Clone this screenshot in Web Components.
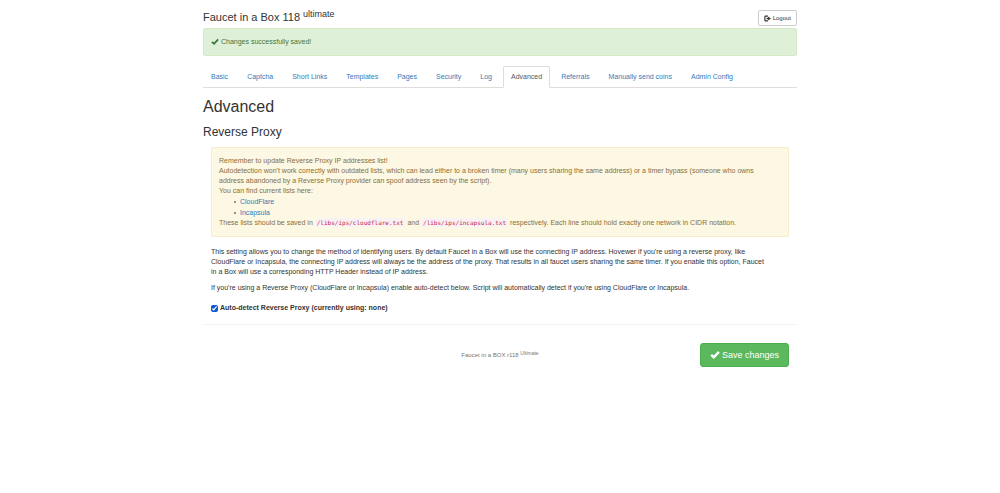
<!DOCTYPE html>
<html lang="en">
<head>
<meta charset="utf-8">
<meta name="viewport" content="width=device-width, initial-scale=1">
<title>Faucet in a Box</title>
<style>
  body {
    margin: 0;
    background: #fff;
    color: #333;
    font-family: "Liberation Sans", Arial, sans-serif;
    font-size: 7px;
    line-height: 10px;
  }
</style>
</head>
<body>
<faucet-admin></faucet-admin>

<script>
/**
 * Small inline icons.
 *
 * @element faucet-icon
 */
class FaucetIcon extends HTMLElement {
  static get shapes() {
    return {
      ok: `<path d="M0.6 9 L3.2 6.4 L6 8.8 L13 1.6 L15.6 4.2 L6.2 14.2 Z"/>`,
      logout: `<path d="M9 2.5 H3.5 Q2 2.5 2 4 V12 Q2 13.5 3.5 13.5 H9" fill="none" stroke="currentColor" stroke-width="2.6"/>
               <path d="M6 6.4 H9.6 V3.2 L15.8 8 L9.6 12.8 V9.6 H6 Z"/>`,
    };
  }

  constructor() {
    super();
    this.attachShadow({ mode: "open" });
  }

  connectedCallback() {
    this.shadowRoot.innerHTML = `
      <style>
        :host { display: inline-block; width: 8px; height: 8px; vertical-align: -2px; }
        svg { display: block; width: 100%; height: 100%; fill: currentColor; }
      </style>
      <svg viewBox="0 0 16 16" aria-hidden="true">${FaucetIcon.shapes[this.getAttribute("name")]}</svg>
    `;
  }
}

customElements.define("faucet-icon", FaucetIcon);

/**
 * A message box, type is "success" or "warning".
 *
 * @element faucet-alert
 */
class FaucetAlert extends HTMLElement {
  constructor() {
    super();
    this.attachShadow({ mode: "open" });
    this.shadowRoot.innerHTML = `
      <style>
        :host {
          display: block;
          padding: 8px 7px;
          border: 1px solid;
          border-radius: 2px;
        }
        :host([type="success"]) { color: #3c763d; background: #dff0d8; border-color: #d6e9c6; }
        :host([type="warning"]) { color: #8a6d3b; background: #fcf8e3; border-color: #faebcc; }
      </style>
      <slot></slot>
    `;
  }
}

customElements.define("faucet-alert", FaucetAlert);

/**
 * A button, variant is "default" or "success".
 *
 * @element faucet-button
 */
class FaucetButton extends HTMLElement {
  constructor() {
    super();
    this.attachShadow({ mode: "open" });
    this.shadowRoot.innerHTML = `
      <style>
        :host { display: block; }
        ::slotted(faucet-icon) { width: 7px; height: 7px; }
        :host([variant="success"]) ::slotted(faucet-icon) { width: 10px; height: 10px; }
        button {
          display: flex;
          align-items: center;
          gap: 2px;
          margin: 0;
          padding: 2px 5px;
          border: 1px solid #ccc;
          border-radius: 2px;
          background: #fff;
          color: #333;
          font: inherit;
          font-size: 6px;
          line-height: 10px;
          cursor: pointer;
        }
        :host([variant="success"]) button {
          padding: 5px 9px;
          border-color: #4cae4c;
          border-radius: 3px;
          background: #5cb85c;
          color: #fff;
          font-size: 9px;
          line-height: 12px;
        }
      </style>
      <button type="button"><slot></slot></button>
    `;
  }
}

customElements.define("faucet-button", FaucetButton);

/**
 * The row of tabs over the settings.
 *
 * @element faucet-tabs
 */
class FaucetTabs extends HTMLElement {
  static get styles() {
    return `
      <style>
        :host { display: block; border-bottom: 1px solid #ddd; }
        ul {
          display: flex;
          flex-wrap: wrap;
          gap: 3px;
          margin: 0 0 -1px;
          padding: 0;
          list-style: none;
        }
        a {
          display: block;
          padding: 5px 7px;
          border: 1px solid transparent;
          border-radius: 2px 2px 0 0;
          color: #337ab7;
          text-decoration: none;
        }
        a[aria-current] {
          border-color: #ddd #ddd #fff;
          background: #fff;
          color: #555;
        }
      </style>
    `;
  }

  constructor() {
    super();
    this.attachShadow({ mode: "open" });
  }

  connectedCallback() {
    const active = this.getAttribute("active");
    const items = this.getAttribute("items").split(",").map((name) => {
      const current = name === active ? ` aria-current="page"` : "";
      return `<li><a href="#"${current}>${name}</a></li>`;
    });
    this.shadowRoot.innerHTML = FaucetTabs.styles + `<nav><ul>${items.join("")}</ul></nav>`;
  }
}

customElements.define("faucet-tabs", FaucetTabs);

/**
 * The whole admin page.
 *
 * @element faucet-admin
 */
class FaucetAdmin extends HTMLElement {
  static get styles() {
    return `
      <style>
        :host { display: block; max-width: 594px; margin: 0 auto; padding: 10px 8px; }
        h1, h2, h3 { margin: 0; font-weight: 400; }
        header {
          display: flex;
          justify-content: space-between;
          align-items: flex-start;
          margin-bottom: 2px;
        }
        h1 { font-size: 11px; line-height: 14px; }
        h2 { margin: 10px 0 9px; font-size: 16px; line-height: 18px; }
        h3 { font-size: 12px; line-height: 14px; }
        sup { position: relative; top: -4px; font-size: 9px; line-height: 0; vertical-align: baseline; }
        faucet-tabs { margin-top: 10px; }
        .panel { padding: 8px 8px 11px; border-bottom: 1px solid #f2f2f2; }
        .notice { margin-bottom: 10px; }
        .notice ul { margin: 0; padding: 0 0 0 15px; line-height: 11px; list-style: none; }
        .notice li { display: flex; align-items: center; gap: 4px; }
        .notice li::before { content: ""; width: 2px; height: 2px; border-radius: 1px; background: currentColor; }
        a { color: #337ab7; text-decoration: none; }
        code {
          padding: 1px 2px;
          border-radius: 2px;
          background: #f9f2f4;
          color: #c7254e;
          font-family: "DejaVu Sans Mono", monospace;
          font-size: 6px;
        }
        p { margin: 0 0 6px; }
        .check {
          display: flex;
          align-items: center;
          gap: 2px;
          margin-top: 10px;
          font-weight: 700;
        }
        .check input { width: 7px; height: 7px; margin: 0; accent-color: #0b57d0; }
        footer {
          display: grid;
          grid-template-columns: 1fr auto 1fr;
          align-items: center;
          padding: 18px 8px;
        }
        footer small { grid-column: 2; color: #777; font-size: 6px; }
        footer sup { top: -2px; font-size: 5px; }
        footer faucet-button { justify-self: end; }
      </style>
    `;
  }

  static get markup() {
    return `
      <header>
        <h1>Faucet in a Box 118 <sup>ultimate</sup></h1>
        <faucet-button><faucet-icon name="logout"></faucet-icon>Logout</faucet-button>
      </header>
      <faucet-alert type="success"><faucet-icon name="ok"></faucet-icon> Changes successfully saved!</faucet-alert>
      <faucet-tabs active="Advanced"
        items="Basic,Captcha,Short Links,Templates,Pages,Security,Log,Advanced,Referrals,Manually send coins,Admin Config"></faucet-tabs>
      <main>
        <h2>Advanced</h2>
        <h3>Reverse Proxy</h3>
        <div class="panel">
          <faucet-alert class="notice" type="warning">
            Remember to update Reverse Proxy IP addresses list!<br>
            Autodetection won't work correctly with outdated lists, which can lead either to a broken timer (many users sharing the same address) or a timer bypass (someone who owns<br>
            address abandoned by a Reverse Proxy provider can spoof address seen by the script).<br>
            You can find current lists here:
            <ul>
              <li><a href="#">CloudFlare</a></li>
              <li><a href="#">Incapsula</a></li>
            </ul>
            These lists should be saved in <code>/libs/ips/cloudflare.txt</code> and <code>/libs/ips/incapsula.txt</code> respectively. Each line should hold exactly one network in CIDR notation.
          </faucet-alert>
          <p>This setting allows you to change the method of identifying users. By default Faucet in a Box will use the connecting IP address. Hovewer if you're using a reverse proxy, like<br>
            CloudFlare or Incapsula, the connecting IP address will always be the address of the proxy. That results in all faucet users sharing the same timer. If you enable this option, Faucet<br>
            in a Box will use a corresponding HTTP Header instead of IP address.</p>
          <p>If you're using a Reverse Proxy (CloudFlare or Incapsula) enable auto-detect below. Script will automatically detect if you're using CloudFlare or Incapsula.</p>
          <label class="check"><input type="checkbox" checked>Auto-detect Reverse Proxy (currently using: none)</label>
        </div>
      </main>
      <footer>
        <small>Faucet in a BOX r118 <sup>Ultimate</sup></small>
        <faucet-button variant="success"><faucet-icon name="ok"></faucet-icon>Save changes</faucet-button>
      </footer>
    `;
  }

  constructor() {
    super();
    const template = document.createElement("template");

    template.innerHTML = this.constructor.styles + this.constructor.markup;
    this.attachShadow({ mode: "open" });
    this.shadowRoot.appendChild(template.content.cloneNode(true));
  }
}

customElements.define("faucet-admin", FaucetAdmin);
</script>
</body>
</html>
